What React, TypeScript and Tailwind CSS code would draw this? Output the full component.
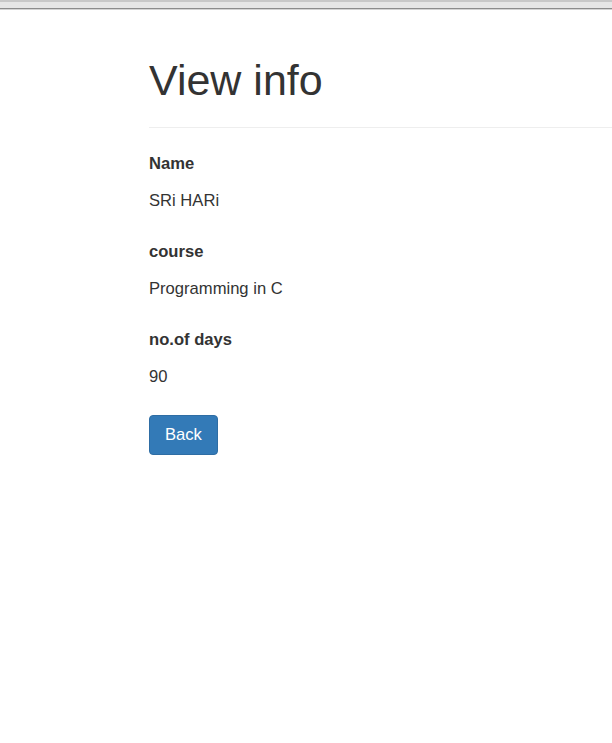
export default function App() {
  const fields = [
    { label: 'Name', value: 'SRi HARi' },
    { label: 'course', value: 'Programming in C' },
    { label: 'no.of days', value: '90' },
  ];

  return (
    <div className="min-h-screen bg-white font-['Liberation_Sans',Arial,sans-serif] text-[#333]">
      {/* browser chrome strip */}
      <div className="h-[2px] bg-[#c8c8c8]" />
      <div className="h-[6px] bg-[#e6e6e6]" />
      <div className="h-[1px] bg-[#8c8c8c]" />
      <div className="h-[1px] bg-[#d4d4d4]" />

      <div className="pl-[149px]">
        <div className="pt-[47px] pb-[24px] border-b border-[#eee]">
          <h1 className="text-[43px] leading-[46px] font-normal">View info</h1>
        </div>

        <dl className="pt-[24px] text-[16.6px] leading-[23px]">
          {fields.map((f) => (
            <div key={f.label} className="mb-[28px]">
              <dt className="font-bold">{f.label}</dt>
              <dd className="mt-[14px]">{f.value}</dd>
            </div>
          ))}
        </dl>

        <button className="h-[40px] px-[15px] rounded-[4px] bg-[#337ab7] border border-[#2e6da4] text-white text-[16.6px] -mt-[1px]">
          Back
        </button>
      </div>
    </div>
  );
}
